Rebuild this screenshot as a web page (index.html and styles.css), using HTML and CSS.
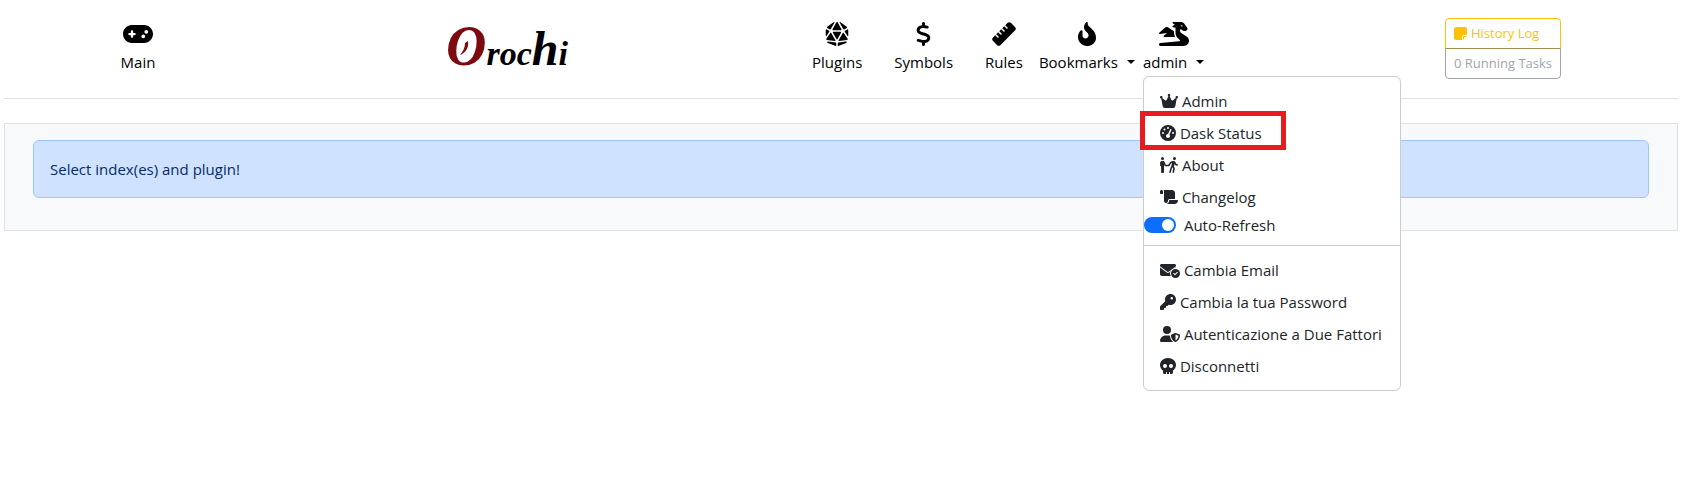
FILE: index.html
```html
<!DOCTYPE html>
<html lang="it">
<head>
<meta charset="utf-8">
<meta name="viewport" content="width=device-width, initial-scale=1">
<title>Orochi</title>
<link rel="stylesheet" href="styles.css">
</head>
<body>
<header class="topbar">
  <div class="topbar-main">
    <a class="nav-link" href="#">
      <svg class="nav-icon" viewBox="0 0 640 512" aria-hidden="true"><path d="M192 64C86 64 0 150 0 256S86 448 192 448H448c106 0 192-86 192-192s-86-192-192-192H192zM496 168a40 40 0 1 1 0 80 40 40 0 1 1 0-80zM392 304a40 40 0 1 1 80 0 40 40 0 1 1 -80 0zM168 200c0-13.3 10.7-24 24-24s24 10.7 24 24v32h32c13.3 0 24 10.7 24 24s-10.7 24-24 24H216v32c0 13.3-10.7 24-24 24s-24-10.7-24-24V280H136c-13.3 0-24-10.7-24-24s10.7-24 24-24h32V200z"/></svg>
      <span>Main</span>
    </a>
  </div>
  <a class="logo" href="#" aria-label="Orochi">
    <svg class="logo-art" viewBox="0 0 120 64">
      <text class="logo-text" x="0" y="55"><tspan class="logo-o">O</tspan><tspan class="logo-small">roc</tspan><tspan class="logo-h">h</tspan><tspan class="logo-small">i</tspan></text>
      <path class="logo-flick" d="M19 33 22 31C23 37 20 43 14 45 17 41 19 38 19 33Z"/>
    </svg>
  </a>
  <nav class="topbar-nav">
    <div class="nav-wide">
      <a class="nav-link" href="#">
        <svg class="nav-icon" viewBox="0 0 512 512" aria-hidden="true"><path d="M48.700 125.800l53.200 31.900c7.800 4.700 17.800 2 22.200-5.900L201.600 12.100c3-5.400-.9-12.100-7.100-12.100c-1.600 0-3.200 .5-4.600 1.400L47.900 98.800c-9.600 6.600-9.200 20.900 .8 26.900zM16 171.700V295.300c0 8 10.400 11 14.700 4.400l60-92c5-7.600 2.600-17.800-5.200-22.500L40.200 158C29.600 151.600 16 159.300 16 171.700zM310.400 12.100l77.600 139.600c4.400 7.900 14.500 10.600 22.200 5.900l53.200-31.900c10-6 10.400-20.300 .8-26.900L322.100 1.400c-1.400-.9-3-1.400-4.600-1.400c-6.200 0-10.100 6.700-7.100 12.100zM496 171.700c0-12.400-13.600-20.100-24.200-13.700l-45.300 27.200c-7.800 4.700-10.100 14.900-5.200 22.500l60 92c4.300 6.700 14.700 3.600 14.700-4.400V171.700zm-49.300 246L286.100 436.600c-8.100 .9-14.100 7.800-14.100 15.900v52.800c0 3.700 3 6.800 6.800 6.800c.8 0 1.600-.1 2.400-.4l172.700-64c6.100-2.200 10.100-8 10.100-14.500c0-9.300-8.100-16.500-17.300-15.400zM233.200 512c3.700 0 6.800-3 6.800-6.800V452.600c0-8.100-6.100-14.900-14.100-15.900l-160.600-19c-9.200-1.100-17.300 6.100-17.300 15.400c0 6.500 4 12.300 10.100 14.500l172.700 64c.8 .3 1.600 .4 2.400 .4zM41.700 382.900l170.900 20.200c7.800 .9 13.400-7.500 9.500-14.300l-85.700-150c-5.900-10.400-20.700-10.800-27.300-.8L30.200 358.200c-6.500 9.900-.3 23.300 11.500 24.700zm439.600-24.800L402.900 238.100c-6.500-10-21.400-9.600-27.300 .8L290.200 388.500c-3.900 6.800 1.600 15.200 9.500 14.300l170.100-20c11.800-1.400 18-14.700 11.500-24.600zm-216.900 11l78.400-137.200c6.100-10.700-1.600-23.900-13.900-23.900H183.100c-12.300 0-20 13.300-13.900 23.900l78.400 137.200c3.700 6.400 13 6.400 16.700 0zM174.400 176H337.600c12.200 0 19.900-13.100 14-23.800l-80-144c-2.800-5.100-8.100-8.200-14-8.200h-3.200c-5.800 0-11.200 3.200-14 8.200l-80 144c-5.900 10.700 1.800 23.800 14 23.800z"/></svg>
        <span>Plugins</span>
      </a>
      <a class="nav-link" href="#">
        <svg class="nav-icon" viewBox="0 0 320 512" aria-hidden="true"><path d="M160 0c17.700 0 32 14.300 32 32V67.700c1.600 .2 3.100 .4 4.700 .7c.4 .1 .7 .1 1.100 .2l48 8.800c17.400 3.200 28.900 19.900 25.700 37.200s-19.900 28.900-37.200 25.700l-47.500-8.700c-31.300-4.600-58.900-1.500-78.300 6.200s-27.200 18.300-29 28.100c-2 10.700-.5 16.700 1.200 20.400c1.800 3.900 5.500 8.300 12.800 13.200c16.300 10.700 41.300 17.700 73.700 26.300l2.900 .8c28.600 7.600 63.600 16.800 89.600 33.800c14.200 9.300 27.600 21.900 35.900 39.500c8.500 17.900 10.300 37.900 6.400 59.200c-6.900 38-33.100 63.400-65.600 76.700c-13.700 5.600-28.600 9.200-44.400 11V480c0 17.700-14.300 32-32 32s-32-14.300-32-32V445.100c-.4-.1-.9-.1-1.300-.2c-24.400-3.800-64.500-14.300-91.500-26.300c-16.100-7.200-23.400-26.100-16.200-42.200s26.100-23.400 42.200-16.200c20.900 9.300 55.300 18.500 75.200 21.600c31.900 4.700 58.200 2 76-5.300c16.900-6.900 24.600-16.900 26.800-28.900c1.900-10.600 .4-16.700-1.300-20.400c-1.900-4-5.600-8.400-13-13.300c-16.400-10.700-41.500-17.700-74-26.300l-2.800-.7C119.400 279.300 84.400 270 58.400 253c-14.200-9.300-27.500-22-35.800-39.600c-8.400-17.900-10.100-37.900-6.100-59.200C23.700 116 52.300 91.200 84.800 78.300c13.300-5.300 27.900-8.900 43.200-11V32c0-17.700 14.300-32 32-32z"/></svg>
        <span>Symbols</span>
      </a>
      <a class="nav-link" href="#">
        <svg class="nav-icon" viewBox="0 0 512 512" aria-hidden="true"><path d="M177.900 494.100c-18.700 18.700-49.100 18.700-67.900 0L17.900 401.900c-18.700-18.700-18.700-49.100 0-67.900l50.700-50.700 48 48c6.200 6.200 16.400 6.200 22.600 0s6.200-16.400 0-22.600l-48-48 41.400-41.400 48 48c6.200 6.200 16.400 6.200 22.600 0s6.200-16.400 0-22.600l-48-48 41.400-41.400 48 48c6.200 6.200 16.400 6.200 22.600 0s6.200-16.400 0-22.600l-48-48 41.400-41.400 48 48c6.200 6.200 16.400 6.200 22.600 0s6.200-16.400 0-22.600l-48-48 50.700-50.700c18.700-18.700 49.100-18.700 67.900 0l92.100 92.100c18.700 18.700 18.700 49.100 0 67.900L177.900 494.100z"/></svg>
        <span>Rules</span>
      </a>
    </div>
    <div class="nav-tight">
      <button class="nav-link" type="button">
        <svg class="nav-icon" viewBox="0 0 384 512" aria-hidden="true"><path d="M153.600 29.900l16-21.300C173.600 3.200 180 0 186.700 0C198.400 0 208 9.600 208 21.300V43.500c0 13.100 5.400 25.700 14.900 34.700L307.600 159C356.400 205.600 384 270.200 384 337.700C384 434 306 512 209.700 512H192C86 512 0 426 0 320v-3.800c0-48.800 19.400-95.600 53.900-130.100l3.500-3.500c4.200-4.200 10-6.600 16-6.600C85.900 176 96 186.100 96 198.600V288c0 35.300 28.700 64 64 64s64-28.700 64-64v-3.900c0-18-7.200-35.300-19.900-48l-38.600-38.600c-24-24-37.500-56.700-37.500-90.700c0-27.700 9-54.800 25.600-76.900z"/></svg>
        <span class="caret">Bookmarks</span>
      </button>
      <div class="dropdown">
        <button class="nav-link" type="button" aria-expanded="true">
          <svg class="nav-icon" viewBox="0 0 640 512" aria-hidden="true"><path d="M352 124.500l-51.900-13c-6.500-1.600-11.300-7.100-12-13.800s2.800-13.100 8.700-16.100l40.800-20.400L294.400 28.800c-5.500-4.100-7.800-11.300-5.600-17.900S297.100 0 304 0H416h32 16c30.200 0 58.700 14.200 76.800 38.400l57.600 76.800c6.200 8.300 9.600 18.400 9.600 28.800c0 26.500-21.500 48-48 48H538.500c-17 0-33.300-6.700-45.300-18.700L480 160H448v21.500c0 24.800 12.800 47.900 33.800 61.100l106.600 66.600c32.100 20.100 51.600 55.200 51.600 93.100C640 462.900 590.900 512 530.200 512H496 432 32.300c-3.300 0-6.600-.4-9.600-1.400C13.500 507.800 6 501 2.400 492.100C1 488.700 .2 485.200 0 481.400c-.2-3.700 .3-7.300 1.300-10.700c2.800-9.200 9.600-16.700 18.600-20.400c3-1.200 6.200-2 9.500-2.200L433.300 412c8.300-.7 14.700-7.700 14.700-16.100c0-4.300-1.700-8.400-4.700-11.400l-44.400-44.400c-30-30-46.900-70.700-46.900-113.100V181.500v-57zM510.700 79.700L464.300 68.100c-.2 1.300-.3 2.600-.3 3.900c0 13.300 10.700 24 24 24c10.600 0 19.500-6.800 22.700-16.300zM130.900 116.500c16.300-14.500 40.400-16.200 58.500-4.100l130.600 87V227c0 32.800 8.400 64.800 24 93H112c-6.700 0-12.700-4.200-15-10.400s-.5-13.300 4.600-17.700L171 232.300 18.400 255.800c-7 1.100-13.900-2.600-16.900-9s-1.500-14.100 3.800-18.800L130.900 116.500z"/></svg>
          <span class="caret">admin</span>
        </button>
        <ul class="menu">
          <li><a class="menu-item" href="#"><svg class="menu-icon" viewBox="0 0 576 512" aria-hidden="true"><path d="M309 106c11.400-7 19-19.700 19-34c0-22.100-17.900-40-40-40s-40 17.900-40 40c0 14.400 7.600 27 19 34L209.700 220.600c-9.100 18.200-32.700 23.400-48.600 10.700L72 160c5-6.700 8-15 8-24c0-22.100-17.900-40-40-40S0 113.900 0 136s17.900 40 40 40h.7L86.400 427.400c5.500 30.400 32 52.600 63 52.600H426.600c30.900 0 57.400-22.100 63-52.600L535.300 176h.7c22.100 0 40-17.900 40-40s-17.900-40-40-40s-40 17.900-40 40c0 9 3 17.300 8 24l-89.100 71.300c-15.900 12.700-39.500 7.500-48.600-10.700L309 106z"/></svg>Admin</a></li>
          <li class="marked"><a class="menu-item" href="#"><svg class="menu-icon" viewBox="0 0 512 512" aria-hidden="true"><path d="M0 256a256 256 0 1 1 512 0A256 256 0 1 1 0 256zM288 96a32 32 0 1 0 -64 0 32 32 0 1 0 64 0zM256 416c35.300 0 64-28.700 64-64c0-17.400-6.900-33.100-18.100-44.600L366 161.700c5.300-12.100-.2-26.300-12.300-31.600s-26.300 .2-31.600 12.300L257.900 288c-.6 0-1.300 0-1.900 0c-35.300 0-64 28.700-64 64s28.700 64 64 64zM176 144a32 32 0 1 0 -64 0 32 32 0 1 0 64 0zM96 288a32 32 0 1 0 0-64 32 32 0 1 0 0 64zm352-32a32 32 0 1 0 -64 0 32 32 0 1 0 64 0z"/></svg>Dask Status</a></li>
          <li><a class="menu-item" href="#"><svg class="menu-icon" viewBox="0 0 576 512" aria-hidden="true"><circle cx="80" cy="48" r="48"/><circle cx="463" cy="48" r="48"/><path class="limb" d="M118 150 170 270 285 270M28 170V270M60 310V485M104 310V485M395 290 450 360 425 485M370 320 320 485M410 155 340 180 285 265M470 165 495 230 550 255"/><path d="M35 132Q80 112 122 132L132 320H32ZM390 132Q450 115 482 160L445 310 365 290Z"/></svg>About</a></li>
          <li><a class="menu-item" href="#"><svg class="menu-icon" viewBox="0 0 576 512" aria-hidden="true"><path d="M0 80v48c0 17.700 14.300 32 32 32H48 96V80c0-26.500-21.500-48-48-48S0 53.500 0 80zM112 32c10 13.400 16 30 16 48V384c0 35.300 28.700 64 64 64s64-28.700 64-64v-5.300c0-32.400 26.300-58.700 58.700-58.700H480V128c0-53-43-96-96-96H112zM464 480c61.900 0 112-50.100 112-112c0-8.800-7.200-16-16-16H314.700c-14.700 0-26.700 11.900-26.700 26.700V384c0 53-43 96-96 96H368h96z"/></svg>Changelog</a></li>
          <li class="switch"><input class="switch-input" type="checkbox" id="auto-refresh" role="switch" checked><label for="auto-refresh">Auto-Refresh</label></li>
          <li class="divider" role="separator"></li>
          <li><a class="menu-item" href="#"><svg class="menu-icon" viewBox="0 0 640 512" aria-hidden="true"><path d="M48 64C21 64 0 85 0 112c0 15 7 29 19 38L237 313c11 9 27 9 38 0L493 150c12-9 19-23 19-38 0-27-21-48-48-48ZM0 176V384c0 35 29 64 64 64H348C310 390 312 320 350 270L294 339c-23 17-53 17-76 0ZM496 192a160 160 0 0 0-90 30L512 176V193Z"/><path d="M496 224a144 144 0 1 0 0 288 144 144 0 1 0 0-288ZM563 323a16 16 0 0 1 0 23l-72 72a16 16 0 0 1-23 0l-40-40a16 16 0 0 1 23-23l29 29 60-61a16 16 0 0 1 23 0Z"/></svg>Cambia Email</a></li>
          <li><a class="menu-item" href="#"><svg class="menu-icon" viewBox="0 0 512 512" aria-hidden="true"><path d="M336 352c97.200 0 176-78.800 176-176S433.200 0 336 0S160 78.800 160 176c0 18.700 2.900 36.800 8.300 53.700L7 391c-4.500 4.500-7 10.600-7 17v80c0 13.300 10.700 24 24 24h80c13.300 0 24-10.700 24-24V448h40c13.300 0 24-10.700 24-24V384h40c6.400 0 12.500-2.500 17-7l33.300-33.300c16.900 5.400 35 8.300 53.700 8.300zM376 96a40 40 0 1 1 0 80 40 40 0 1 1 0-80z"/></svg>Cambia la tua Password</a></li>
          <li><a class="menu-item" href="#"><svg class="menu-icon" viewBox="0 0 640 512" aria-hidden="true"><path d="M224 256A128 128 0 1 0 224 0a128 128 0 1 0 0 256zm-45.700 48C79.800 304 0 383.800 0 482.300C0 498.700 13.300 512 29.700 512H418.300c1.800 0 3.500-.2 5.300-.5c-76.300-55.100-99.800-141-103.100-200.200c-16.100-4.800-33.100-7.300-50.700-7.300H178.300zm308.800-78.300l-120 48C358 277.400 352 286.200 352 296c0 63.300 25.900 168.800 134.800 214.200c5.900 2.500 12.600 2.500 18.500 0C614.100 464.800 640 359.300 640 296c0-9.800-6-18.600-15.100-22.300l-120-48c-5.700-2.300-12.100-2.300-17.800 0zM591.400 312c-3.900 50.700-27.200 116.700-95.400 149.700V273.800L591.400 312z"/></svg>Autenticazione a Due Fattori</a></li>
          <li><a class="menu-item" href="#"><svg class="menu-icon" viewBox="0 0 512 512" aria-hidden="true"><path d="M416 398.900c58.500-41.100 96-104.100 96-174.900C512 100.300 397.400 0 256 0S0 100.300 0 224c0 70.700 37.500 133.800 96 174.900v65.100c0 26.500 21.500 48 48 48h48V464c0-8.800 7.200-16 16-16s16 7.200 16 16v48h64V464c0-8.800 7.200-16 16-16s16 7.200 16 16v48h48c26.500 0 48-21.500 48-48V398.900zM96 256a64 64 0 1 1 128 0A64 64 0 1 1 96 256zm256-64a64 64 0 1 1 0 128 64 64 0 1 1 0-128z"/></svg>Disconnetti</a></li>
        </ul>
      </div>
    </div>
  </nav>
  <div class="topbar-actions">
    <div class="button-stack">
      <button class="btn btn-warning" type="button"><svg class="btn-icon" viewBox="0 0 13 13" aria-hidden="true"><path d="M2 0H11Q13 0 13 2V8H9.500Q8 8 8 9.500V13H2Q0 13 0 11V2Q0 0 2 0ZM9 13V9.500Q9 9 9.500 9H13L12 10H10V12Z"/></svg>History Log</button>
      <button class="btn btn-muted" type="button" disabled>0 Running Tasks</button>
    </div>
  </div>
</header>
<main class="panel">
  <div class="alert" role="alert">Select index(es) and plugin!</div>
</main>
</body>
</html>
```
FILE: styles.css
```css
*,
*::before,
*::after { box-sizing: border-box; }

body {
  min-height: 100vh;
  margin: 0;
  padding: 0 6px 0 4px;
  background: #fff;
  color: #212529;
  font: 15px/24px "Open Sans", "Noto Sans", sans-serif;
}

a { color: inherit; text-decoration: none; }

button { font: inherit; }

.topbar {
  display: grid;
  grid-template-columns: 268fr 468fr 588fr 350fr;
  align-items: start;
  padding-bottom: 19px;
  margin-bottom: 24px;
  border-bottom: 1px solid #dee2e6;
}

.topbar-main,
.topbar-actions { display: flex; justify-content: center; }

.topbar-main,
.topbar-nav { padding-top: 22px; }

.topbar-nav { display: flex; gap: 16px; padding-left: 72px; }
.nav-wide { display: flex; gap: 32px; }
.nav-tight { display: flex; gap: 8px; }

.nav-link {
  display: flex;
  flex-direction: column;
  align-items: center;
  gap: 4px;
  padding: 0;
  border: 0;
  background: none;
  color: #000;
  white-space: nowrap;
}

.nav-icon { display: block; width: auto; height: 24px; fill: currentColor; }

.caret::after {
  content: "";
  display: inline-block;
  margin-left: 9px;
  vertical-align: 4px;
  border: 4px solid transparent;
  border-top-color: currentColor;
  border-bottom: 0;
}

.logo { justify-self: center; padding-top: 10px; }
.logo-art { display: block; width: 120px; height: 64px; overflow: visible; }
.logo-text { font-family: "Liberation Serif", serif; font-style: italic; font-weight: 700; }
.logo-o { fill: #7d0a0e; font-size: 56px; }
.logo-small { fill: #000; font-size: 34px; }
.logo-h { fill: #000; font-size: 48px; }
.logo-flick { fill: #7d0a0e; }

.dropdown { position: relative; }

.menu {
  position: absolute;
  top: 54px;
  left: 0;
  z-index: 10;
  min-width: 258px;
  margin: 0;
  padding: 8px 0;
  border: 1px solid #ccc;
  border-radius: 6px;
  background: #fff;
  list-style: none;
  white-space: nowrap;
}

.menu-item { display: flex; align-items: center; gap: 4px; padding: 4px 16px; }
.menu-icon { flex: none; width: auto; height: 16px; fill: currentColor; }
.limb { fill: none; stroke: currentColor; stroke-width: 50; stroke-linecap: round; stroke-linejoin: round; }

.marked { position: relative; }
.marked::after {
  content: "";
  position: absolute;
  top: -6px;
  left: -4px;
  width: 146px;
  height: 39px;
  border: 5px solid #e81c1f;
  pointer-events: none;
}

.switch { display: flex; align-items: center; gap: 8px; }

.switch-input {
  appearance: none;
  display: flex;
  justify-content: flex-end;
  width: 32px;
  height: 16px;
  margin: 0;
  padding: 2px;
  border-radius: 8px;
  background: #0d6efd;
}

.switch-input::before {
  content: "";
  width: 12px;
  height: 12px;
  border-radius: 50%;
  background: #fff;
}

.switch-input:not(:checked) { justify-content: flex-start; background: #adb5bd; }

.divider { height: 1px; margin: 8px 0; background: #ccc; }

.topbar-actions { padding-top: 18px; }
.button-stack { display: flex; flex-direction: column; }

.btn {
  display: flex;
  align-items: center;
  gap: 4px;
  padding: 4px 8px;
  border: 1px solid;
  background: transparent;
  font-size: 13px;
  line-height: 21px;
}

.btn-icon { width: 13px; height: 13px; fill: currentColor; }
.btn-warning { border-radius: 4px 4px 0 0; color: #ffc107; }
.btn-muted { margin-top: -1px; border-radius: 0 0 4px 4px; color: #6c757d; opacity: 0.65; }

.panel {
  padding: 16px 28px 32px;
  border: 1px solid #dee2e6;
  background: #f8f9fa;
}

.alert {
  padding: 16px;
  border: 1px solid #9ec5fe;
  border-radius: 6px;
  background: #cfe2ff;
  color: #052c65;
}
```
